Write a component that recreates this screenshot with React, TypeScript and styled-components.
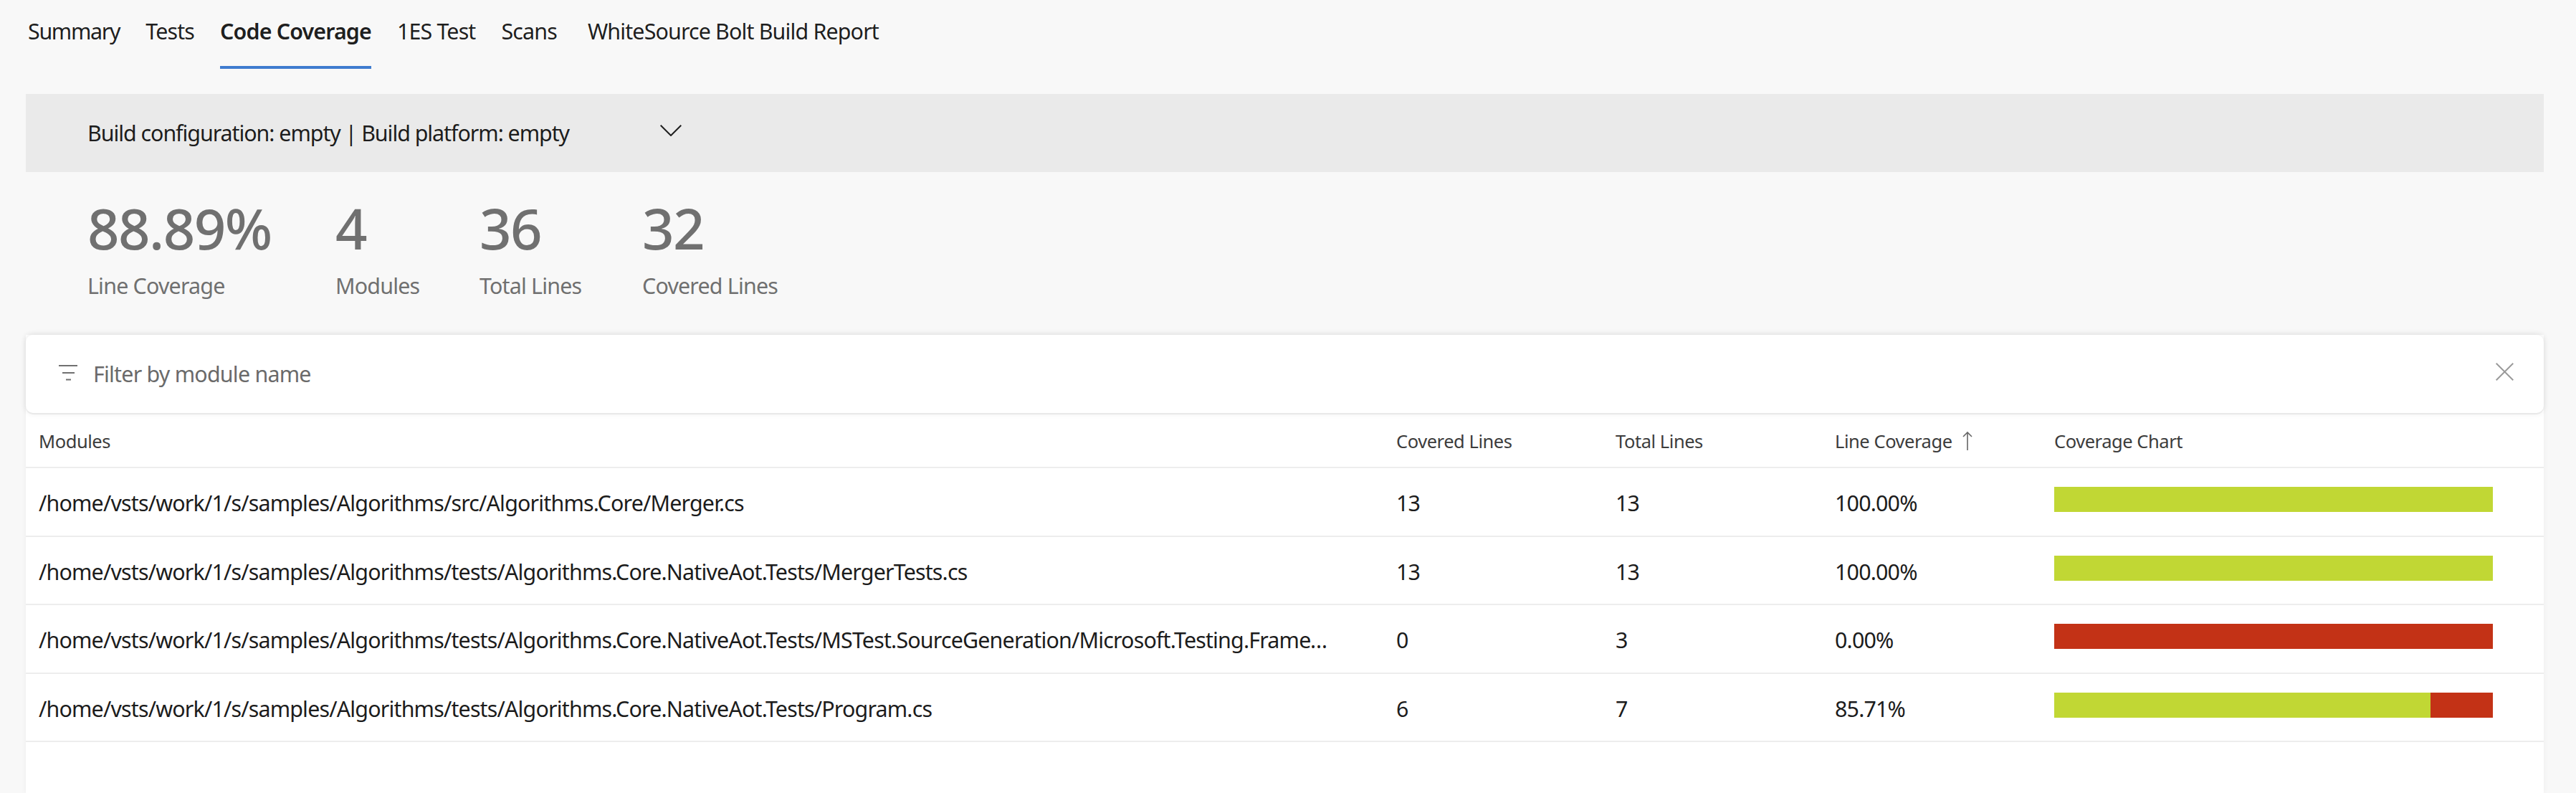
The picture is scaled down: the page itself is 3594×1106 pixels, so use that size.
import React from "react";
import styled, { createGlobalStyle } from "styled-components";

const Global = createGlobalStyle`
  html, body { margin: 0; padding: 0; background: #f8f8f8; }
  body { font-family: "Noto Sans", "Open Sans", "Liberation Sans", sans-serif; }
`;

const Page = styled.div`
  width: 3594px;
  height: 1106px;
  overflow: hidden;
  box-sizing: border-box;
  padding: 0 45px 0 36px;
  color: rgba(0, 0, 0, 0.9);
`;

const Tabs = styled.nav`
  display: flex;
  height: 96px;
  gap: 36px;
  box-sizing: border-box;
  margin-left: 3px;
`;

const Tab = styled.div<{ $active?: boolean }>`
  height: 96px;
  box-sizing: border-box;
  padding-top: 20px;
  line-height: 48px;
  font-size: 30.4px;
  font-weight: ${(p) => (p.$active ? 600 : 400)};
  letter-spacing: -0.85px;
  white-space: nowrap;
  border-bottom: 4px solid ${(p) => (p.$active ? "#3f7ccf" : "transparent")};
  &:first-child {
    letter-spacing: -1.3px;
  }
  &:last-child {
    margin-left: 7px;
  }
`;

const ConfigBar = styled.div`
  display: flex;
  align-items: center;
  margin-top: 35px;
  height: 109px;
  background: #eaeaea;
  padding-left: 86px;
  font-size: 30.4px;
  letter-spacing: -1.05px;
`;

const Chevron = styled.svg`
  margin-left: 127px;
  width: 30px;
  height: 16px;
  margin-top: -8px;
  fill: none;
  stroke: #1f1f1f;
  stroke-width: 2;
`;

const Stats = styled.section`
  display: flex;
  height: 227px;
  padding-left: 86px;
  box-sizing: border-box;
`;

const Stat = styled.div<{ $w: number }>`
  width: ${(p) => p.$w}px;
  padding-top: 33px;
  color: #707070;
`;

const StatValue = styled.div`
  font-size: 78px;
  line-height: 90px;
  font-weight: 550;
  letter-spacing: -1.6px;
`;

const StatLabel = styled.div`
  margin-top: 15px;
  font-size: 30.4px;
  line-height: 42px;
  letter-spacing: -0.8px;
`;

const Panel = styled.section`
  background: #fff;
  height: 639px;
  box-shadow: 0 0 8px rgba(0, 0, 0, 0.05);
`;

const FilterCard = styled.div`
  display: flex;
  align-items: center;
  height: 109px;
  padding: 0 42px 0 46px;
  box-sizing: border-box;
  border-radius: 10px;
  background: #fff;
  box-shadow: 0 2px 0 #e9e9e9, 0 0 8px rgba(0, 0, 0, 0.1);
  color: #6a6a6a;
  font-size: 30.4px;
  letter-spacing: -0.78px;
`;

const FilterIcon = styled.svg`
  width: 26px;
  height: 22px;
  margin-right: 22px;
  margin-top: -4px;
  stroke: #707070;
  stroke-width: 2;
  fill: none;
`;

const FilterText = styled.span`
  flex: 1;
`;

const CloseIcon = styled.svg`
  width: 25px;
  height: 25px;
  margin-top: -6px;
  stroke: #9a9a9a;
  stroke-width: 2;
  fill: none;
`;

const Row = styled.div<{ $head?: boolean }>`
  display: grid;
  grid-template-columns: 1894px 306px 306px 306px 1fr;
  align-items: center;
  height: ${(p) => (p.$head ? 77 : 95.5)}px;
  box-sizing: border-box;
  padding: ${(p) => (p.$head ? "2px" : "4px")} 0 0 18px;
  border-bottom: 2px solid #ededed;
  font-size: ${(p) => (p.$head ? 25.5 : 30.4)}px;
  letter-spacing: ${(p) => (p.$head ? -0.45 : -0.82)}px;
  color: ${(p) => (p.$head ? "#3c3c3c" : "#1c1c1c")};
`;

const ModuleCell = styled.div`
  width: 1806px;
  overflow: hidden;
  white-space: nowrap;
  text-overflow: ellipsis;
`;

const SortCell = styled.div`
  display: flex;
  align-items: center;
  gap: 14px;
`;

const SortArrow = styled.svg`
  width: 14px;
  height: 26px;
  stroke: #666;
  stroke-width: 1.6;
  fill: none;
`;

const Bar = styled.div`
  display: flex;
  width: 612px;
  height: 35px;
  margin-top: -10px;
  background: #c33216;
`;

const BarFill = styled.div`
  height: 100%;
  background: #c1d734;
`;

const rows = [
  { m: "/home/vsts/work/1/s/samples/Algorithms/src/Algorithms.Core/Merger.cs", c: "13", t: "13", l: "100.00%", p: 100 },
  { m: "/home/vsts/work/1/s/samples/Algorithms/tests/Algorithms.Core.NativeAot.Tests/MergerTests.cs", c: "13", t: "13", l: "100.00%", p: 100 },
  { m: "/home/vsts/work/1/s/samples/Algorithms/tests/Algorithms.Core.NativeAot.Tests/MSTest.SourceGeneration/Microsoft.Testing.Framework.SourceGeneration.cs", c: "0", t: "3", l: "0.00%", p: 0 },
  { m: "/home/vsts/work/1/s/samples/Algorithms/tests/Algorithms.Core.NativeAot.Tests/Program.cs", c: "6", t: "7", l: "85.71%", p: 85.71 },
];

const tabs = ["Summary", "Tests", "Code Coverage", "1ES Test", "Scans", "WhiteSource Bolt Build Report"];
const stats = [
  { v: "88.89%", l: "Line Coverage", w: 346 },
  { v: "4", l: "Modules", w: 201 },
  { v: "36", l: "Total Lines", w: 227 },
  { v: "32", l: "Covered Lines", w: 300 },
];

export default function App() {
  return (
    <Page>
      <Global />
      <Tabs>
        {tabs.map((t) => (
          <Tab key={t} $active={t === "Code Coverage"}>{t}</Tab>
        ))}
      </Tabs>
      <ConfigBar>
        Build configuration: empty | Build platform: empty
        <Chevron viewBox="0 0 30 16"><path d="M.7.7 15 15 29.3.7" /></Chevron>
      </ConfigBar>
      <Stats>
        {stats.map((s) => (
          <Stat key={s.l} $w={s.w}>
            <StatValue>{s.v}</StatValue>
            <StatLabel>{s.l}</StatLabel>
          </Stat>
        ))}
      </Stats>
      <Panel>
        <FilterCard>
          <FilterIcon viewBox="0 0 26 22"><path d="M0 1h26M5 11h17M10 20.500h7" /></FilterIcon>
          <FilterText>Filter by module name</FilterText>
          <CloseIcon viewBox="0 0 25 25"><path d="M.7.700 24.300 24.300M24.300.700.700 24.300" /></CloseIcon>
        </FilterCard>
        <Row $head>
          <div>Modules</div>
          <div>Covered Lines</div>
          <div>Total Lines</div>
          <SortCell>
            Line Coverage
            <SortArrow viewBox="0 0 14 26"><path d="M7 26V1M1 7l6-6 6 6" /></SortArrow>
          </SortCell>
          <div>Coverage Chart</div>
        </Row>
        {rows.map((r) => (
          <Row key={r.m}>
            <ModuleCell>{r.m}</ModuleCell>
            <div>{r.c}</div>
            <div>{r.t}</div>
            <div>{r.l}</div>
            <Bar><BarFill style={{ width: `${r.p}%` }} /></Bar>
          </Row>
        ))}
      </Panel>
    </Page>
  );
}
